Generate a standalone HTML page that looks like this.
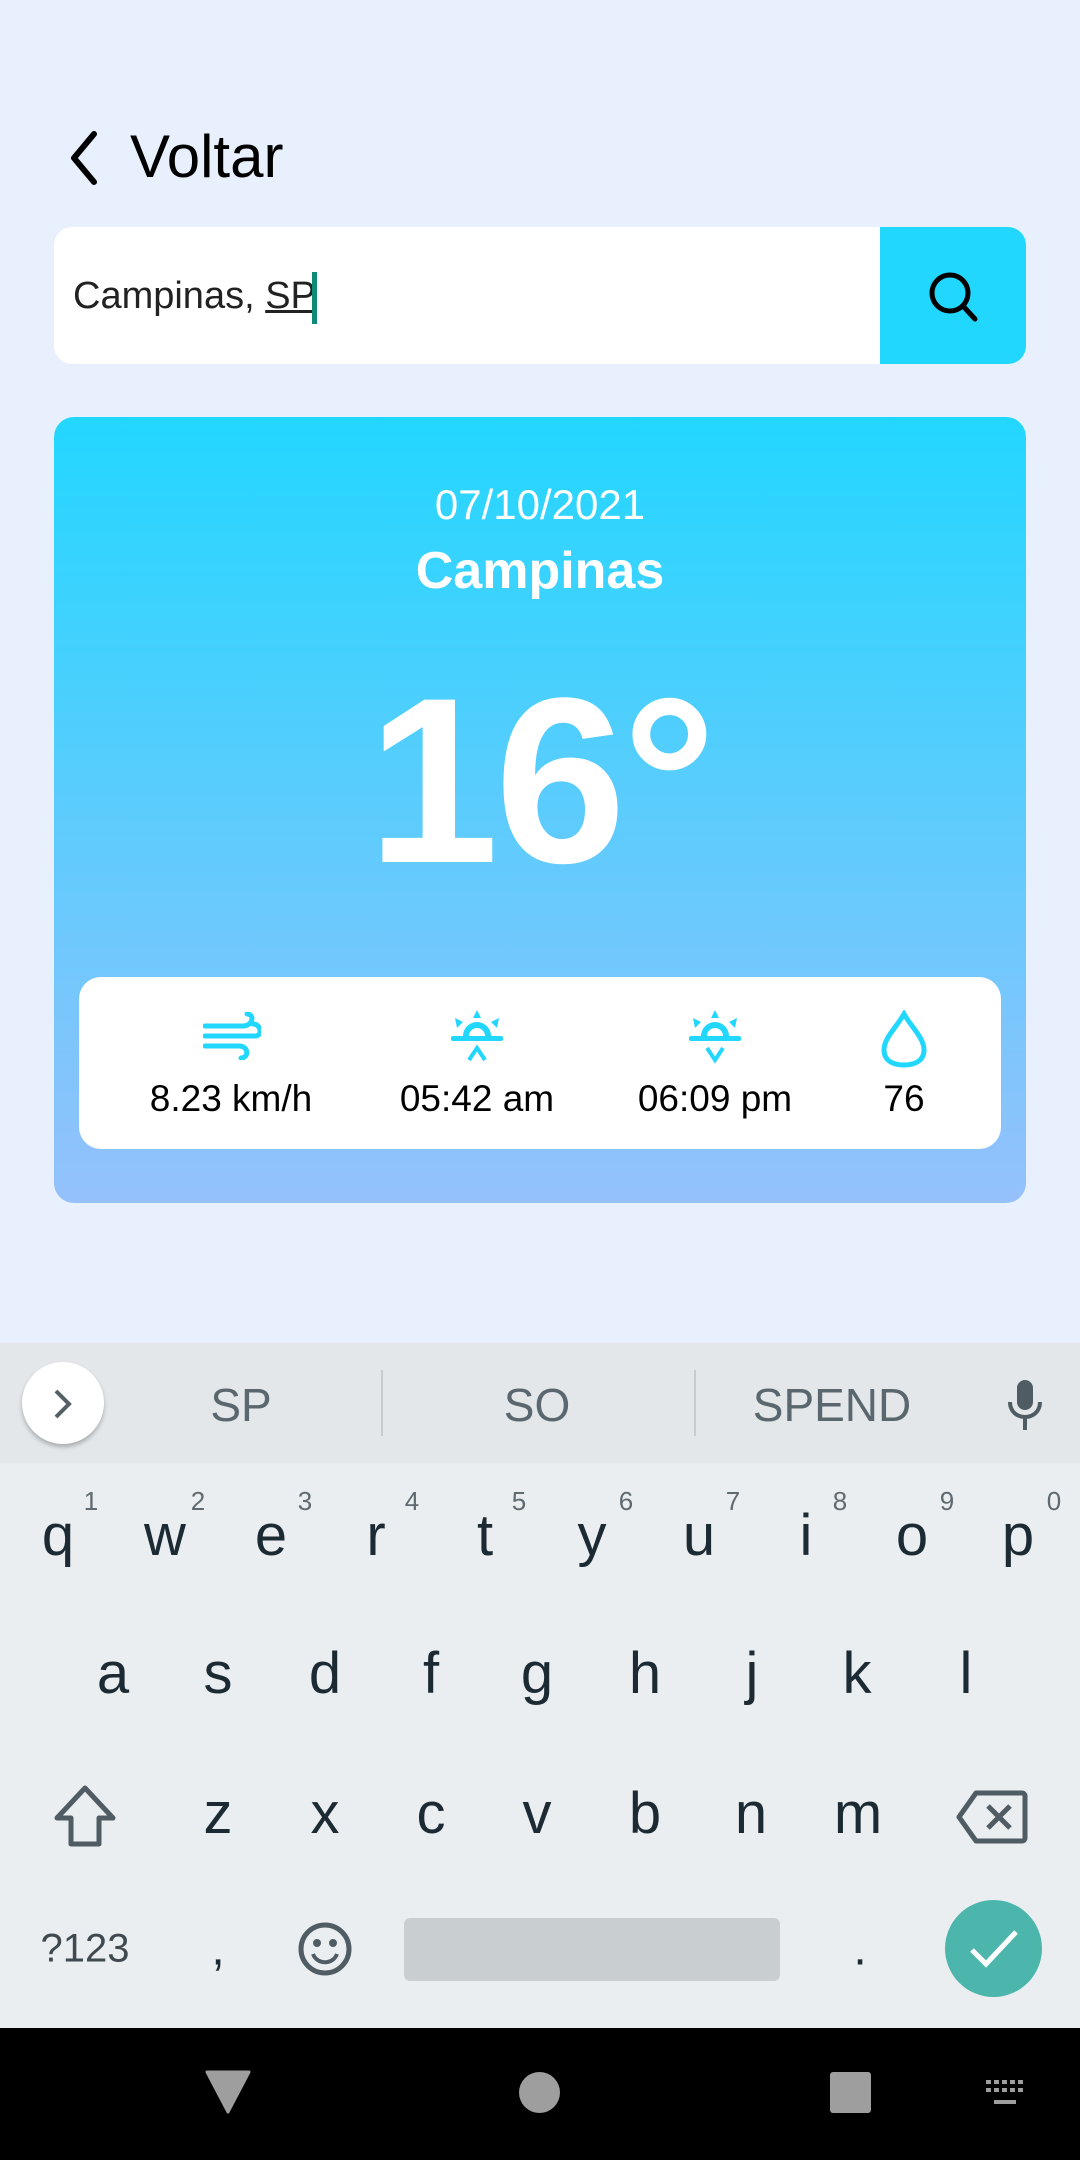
<!DOCTYPE html>
<html><head><meta charset="utf-8"><style>
*{margin:0;padding:0;box-sizing:border-box}
body{width:1080px;height:2160px;background:#e8effd;position:relative;overflow:hidden;font-family:"Liberation Sans",sans-serif}
.a{position:absolute}
.c{position:absolute;transform:translate(-50%,-50%);white-space:nowrap}
.k{position:absolute;transform:translate(-50%,-50%);font-size:58px;color:#1c2a33;line-height:1}
.n{position:absolute;transform:translate(-50%,-50%);font-size:26px;color:#5f6a70;line-height:1}
</style></head><body>
<svg class="a" style="left:66px;top:130px" width="36" height="56" viewBox="0 0 36 56"><path d="M28 4 L8 28 L28 52" fill="none" stroke="#000" stroke-width="6" stroke-linecap="round" stroke-linejoin="round"/></svg>
<div class="a" style="left:130px;top:127px;font-size:60px;line-height:1;color:#000">Voltar</div>

<div class="a" style="left:54px;top:227px;width:972px;height:137px;background:#fff;border-radius:18px;overflow:hidden">
 <div class="a" style="right:0;top:0;width:146px;height:137px;background:#22d7fe"></div>
 <svg class="a" style="right:44px;top:42px" width="56" height="56" viewBox="0 0 56 56"><circle cx="24" cy="24" r="18" fill="none" stroke="#000" stroke-width="5"/><path d="M37 37 L49 50" stroke="#000" stroke-width="5" stroke-linecap="round"/></svg>
 <div class="a" style="left:19px;top:48px;font-size:38px;line-height:42px;color:#222">Campinas, <span style="text-decoration:underline">SP</span></div>
 <div class="a" style="left:258px;top:45px;width:5px;height:52px;background:#0d8b78"></div>
</div>

<div class="a" style="left:54px;top:417px;width:972px;height:786px;border-radius:20px;background:linear-gradient(#22d7fe,#95c1fc)">
 <div class="c" style="left:486px;top:88px;font-size:42px;color:#fff">07/10/2021</div>
 <div class="c" style="left:486px;top:154px;font-size:52px;font-weight:bold;color:#fff">Campinas</div>
 <div class="c" style="left:486px;top:364px;font-size:236px;font-weight:bold;color:#fff;letter-spacing:-4px">16°</div>
 <div class="a" style="left:25px;top:560px;width:922px;height:172px;background:#fff;border-radius:22px"></div>
</div>
<svg class="a" style="left:203px;top:1012px" width="58" height="48" viewBox="0 0 58 48"><g fill="none" stroke="#22d7fe" stroke-width="5" stroke-linecap="round"><path d="M2 14 H40 C50 14 52 2 44 2"/><path d="M2 24 H52 C60 24 58 12 50 12"/><path d="M2 34 H36 C46 34 46 46 38 46"/></g></svg>
<svg class="a" style="left:449px;top:1010px" width="56" height="54" viewBox="0 0 56 54"><g fill="#22d7fe"><path d="M28 0 L32 8 H24Z"/><path d="M6 8 L14 12 L8 18Z"/><path d="M50 8 L42 12 L48 18Z"/><rect x="2" y="26" width="52" height="5" rx="2"/><path d="M14 26 A14 14 0 0 1 42 26 H36 A8 8 0 0 0 20 26Z"/></g><path d="M20 50 L28 38 L36 50" fill="none" stroke="#22d7fe" stroke-width="4"/></svg>
<svg class="a" style="left:687px;top:1010px" width="56" height="54" viewBox="0 0 56 54"><g fill="#22d7fe"><path d="M28 0 L32 8 H24Z"/><path d="M6 8 L14 12 L8 18Z"/><path d="M50 8 L42 12 L48 18Z"/><rect x="2" y="26" width="52" height="5" rx="2"/><path d="M14 26 A14 14 0 0 1 42 26 H36 A8 8 0 0 0 20 26Z"/></g><path d="M20 38 L28 50 L36 38" fill="none" stroke="#22d7fe" stroke-width="4"/></svg>
<svg class="a" style="left:878px;top:1010px" width="52" height="58" viewBox="0 0 52 58"><path d="M26 4 C18 18 6 28 6 40 C6 50 14 55 26 55 C38 55 46 50 46 40 C46 28 34 18 26 4Z" fill="none" stroke="#22d7fe" stroke-width="5"/></svg>
<div class="c" style="left:231px;top:1099px;font-size:37px;color:#000">8.23 km/h</div>
<div class="c" style="left:477px;top:1099px;font-size:37px;color:#000">05:42 am</div>
<div class="c" style="left:715px;top:1099px;font-size:37px;color:#000">06:09 pm</div>
<div class="c" style="left:904px;top:1099px;font-size:37px;color:#000">76</div>

<div class="a" style="left:0;top:1343px;width:1080px;height:120px;background:#e3e7ea"></div>
<div class="a" style="left:0;top:1463px;width:1080px;height:565px;background:#ebeef1"></div>
<div class="a" style="left:22px;top:1362px;width:82px;height:82px;border-radius:50%;background:#fff;box-shadow:0 3px 4px rgba(0,0,0,.25)"></div>
<svg class="a" style="left:52px;top:1388px" width="22" height="32" viewBox="0 0 22 32"><path d="M4 3 L17 16 L4 29" fill="none" stroke="#555f66" stroke-width="4"/></svg>
<div class="a" style="left:381px;top:1370px;width:2px;height:66px;background:#c6cbcf"></div>
<div class="a" style="left:694px;top:1370px;width:2px;height:66px;background:#c6cbcf"></div>
<div class="c" style="left:241px;top:1405px;font-size:46px;color:#5b676e">SP</div>
<div class="c" style="left:537px;top:1405px;font-size:46px;color:#5b676e">SO</div>
<div class="c" style="left:832px;top:1405px;font-size:46px;color:#5b676e">SPEND</div>
<svg class="a" style="left:1005px;top:1378px" width="40" height="54" viewBox="0 0 40 54"><rect x="12" y="2" width="16" height="30" rx="8" fill="#4f5c63"/><path d="M5 24 C5 44 35 44 35 24" fill="none" stroke="#4f5c63" stroke-width="4"/><path d="M20 38 V52" stroke="#4f5c63" stroke-width="4"/></svg>

<div class="k" style="left:58px;top:1536px">q</div><div class="n" style="left:91px;top:1501px">1</div>
<div class="k" style="left:165px;top:1536px">w</div><div class="n" style="left:198px;top:1501px">2</div>
<div class="k" style="left:271px;top:1536px">e</div><div class="n" style="left:305px;top:1501px">3</div>
<div class="k" style="left:376px;top:1536px">r</div><div class="n" style="left:412px;top:1501px">4</div>
<div class="k" style="left:485px;top:1536px">t</div><div class="n" style="left:519px;top:1501px">5</div>
<div class="k" style="left:592px;top:1536px">y</div><div class="n" style="left:626px;top:1501px">6</div>
<div class="k" style="left:699px;top:1536px">u</div><div class="n" style="left:733px;top:1501px">7</div>
<div class="k" style="left:806px;top:1536px">i</div><div class="n" style="left:840px;top:1501px">8</div>
<div class="k" style="left:912px;top:1536px">o</div><div class="n" style="left:947px;top:1501px">9</div>
<div class="k" style="left:1018px;top:1536px">p</div><div class="n" style="left:1054px;top:1501px">0</div>

<div class="k" style="left:113px;top:1674px">a</div><div class="k" style="left:218px;top:1674px">s</div><div class="k" style="left:325px;top:1674px">d</div><div class="k" style="left:431px;top:1674px">f</div><div class="k" style="left:537px;top:1674px">g</div><div class="k" style="left:645px;top:1674px">h</div><div class="k" style="left:752px;top:1674px">j</div><div class="k" style="left:857px;top:1674px">k</div><div class="k" style="left:966px;top:1674px">l</div>

<svg class="a" style="left:53px;top:1784px" width="64" height="64" viewBox="0 0 64 64"><path d="M32 4 L60 34 H46 V60 H18 V34 H4Z" fill="none" stroke="#4f5c63" stroke-width="5" stroke-linejoin="round"/></svg>
<div class="k" style="left:218px;top:1814px">z</div><div class="k" style="left:325px;top:1814px">x</div><div class="k" style="left:431px;top:1814px">c</div><div class="k" style="left:537px;top:1814px">v</div><div class="k" style="left:645px;top:1814px">b</div><div class="k" style="left:751px;top:1814px">n</div><div class="k" style="left:858px;top:1814px">m</div>
<svg class="a" style="left:956px;top:1790px" width="72" height="54" viewBox="0 0 72 54"><path d="M20 3 H66 A3 3 0 0 1 69 6 V48 A3 3 0 0 1 66 51 H20 L3 27Z" fill="none" stroke="#4f5c63" stroke-width="5" stroke-linejoin="round"/><path d="M32 16 L54 38 M54 16 L32 38" stroke="#4f5c63" stroke-width="5"/></svg>

<div class="c" style="left:85px;top:1949px;font-size:40px;color:#3f4a50">?123</div>
<div class="c" style="left:218px;top:1949px;font-size:48px;color:#1c2a33">,</div>
<svg class="a" style="left:297px;top:1921px" width="56" height="56" viewBox="0 0 56 56"><circle cx="28" cy="28" r="24" fill="none" stroke="#4f5c63" stroke-width="5"/><circle cx="20" cy="22" r="4" fill="#4f5c63"/><circle cx="36" cy="22" r="4" fill="#4f5c63"/><path d="M16 33 C20 44 36 44 40 33" fill="none" stroke="#4f5c63" stroke-width="4"/></svg>
<div class="a" style="left:404px;top:1918px;width:376px;height:63px;background:#c9ced1;border-radius:6px"></div>
<div class="c" style="left:860px;top:1949px;font-size:48px;color:#1c2a33">.</div>
<div class="a" style="left:945px;top:1900px;width:97px;height:97px;border-radius:50%;background:#4db6ac"></div>
<svg class="a" style="left:968px;top:1926px" width="52" height="44" viewBox="0 0 52 44"><path d="M4 24 L18 38 L48 6" fill="none" stroke="#fff" stroke-width="5"/></svg>

<div class="a" style="left:0;top:2028px;width:1080px;height:132px;background:#000"></div>
<svg class="a" style="left:205px;top:2070px" width="46" height="44" viewBox="0 0 46 44"><path d="M2 2 H44 L23 42Z" fill="#9e9e9e" stroke="#9e9e9e" stroke-width="3" stroke-linejoin="round"/></svg>
<div class="a" style="left:519px;top:2072px;width:41px;height:41px;border-radius:50%;background:#9e9e9e"></div>
<div class="a" style="left:830px;top:2072px;width:41px;height:41px;border-radius:3px;background:#9e9e9e"></div>
<svg class="a" style="left:985px;top:2078px" width="44" height="32" viewBox="0 0 44 32"><g fill="#9e9e9e"><rect x="1" y="2" width="5" height="4"/><rect x="9" y="2" width="5" height="4"/><rect x="17" y="2" width="5" height="4"/><rect x="25" y="2" width="5" height="4"/><rect x="33" y="2" width="5" height="4"/><rect x="1" y="10" width="5" height="4"/><rect x="9" y="10" width="5" height="4"/><rect x="17" y="10" width="5" height="4"/><rect x="25" y="10" width="5" height="4"/><rect x="33" y="10" width="5" height="4"/><rect x="9" y="22" width="22" height="4"/></g></svg>
</body></html>
